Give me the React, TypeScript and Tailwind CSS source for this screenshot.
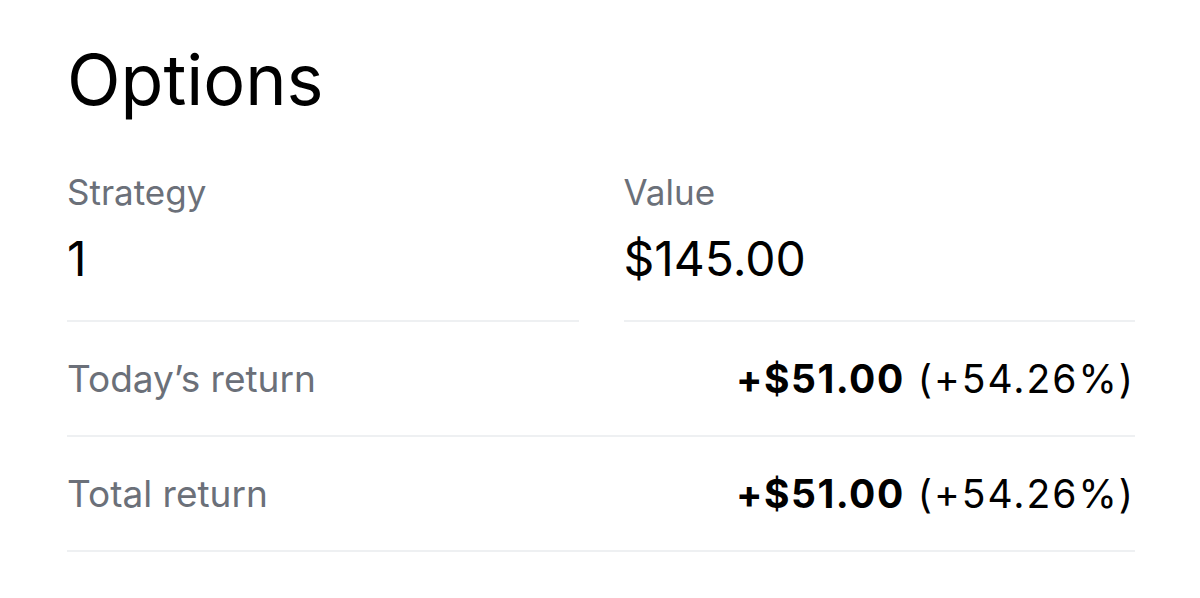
import React from "react";

const font = { fontFamily: "Inter, 'Noto Sans', sans-serif" };

function Row({ label }: { label: string }) {
  return (
    <div className="flex h-[115px] items-center justify-between border-b-2 border-[#eef0f2]">
      <span className="text-[37px] leading-[44px] text-[#6b7079]">{label}</span>
      <span className="text-[39px] leading-[44px] tracking-[2px] text-black">
        <span className="font-bold tracking-[1.5px]">+$51.00</span> (+54.26%)
      </span>
    </div>
  );
}

export default function App() {
  return (
    <div className="min-h-[598px] bg-white pl-[67px] pr-[62px] pt-[44px] antialiased" style={font}>
      <h1 className="text-[70px] leading-[72px] font-normal text-black">Options</h1>
      <div className="mr-[3px] mt-[56px] grid grid-cols-2 gap-[45px]">
        <div className="border-b-2 border-[#eef0f2] pb-[33px]">
          <div className="text-[35px] leading-[40px] text-[#6b7079]">Strategy</div>
          <div className="mt-[19px] text-[48px] leading-[56px] text-black">1</div>
        </div>
        <div className="border-b-2 border-[#eef0f2] pb-[33px]">
          <div className="text-[35px] leading-[40px] text-[#6b7079]">Value</div>
          <div className="mt-[19px] text-[48px] leading-[56px] text-black">$145.00</div>
        </div>
      </div>
      <div className="mr-[3px]">
        <Row label="Today’s return" />
        <Row label="Total return" />
      </div>
    </div>
  );
}
